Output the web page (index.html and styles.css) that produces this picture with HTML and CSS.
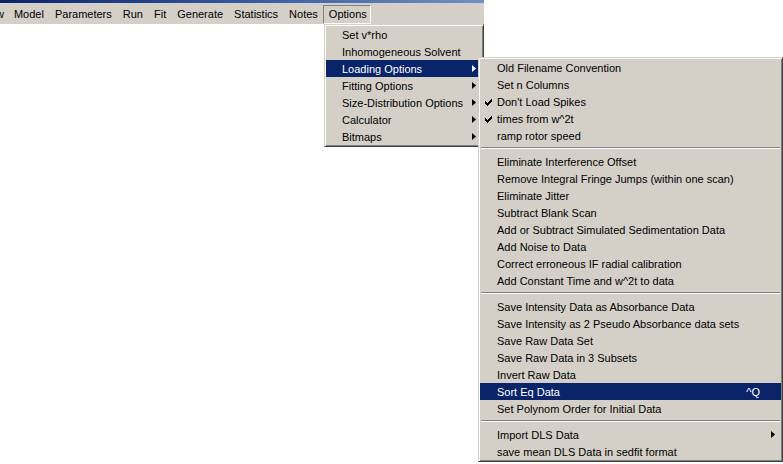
FILE: index.html
```html
<!DOCTYPE html>
<html>
<head>
<meta charset="utf-8">
<link rel="stylesheet" href="styles.css">
</head>
<body>
<div class="app">
  <div class="titlebar"></div>
  <div class="menubar">
    <span class="mb-item partial">w</span>
    <span class="mb-item">Model</span>
    <span class="mb-item">Parameters</span>
    <span class="mb-item">Run</span>
    <span class="mb-item">Fit</span>
    <span class="mb-item">Generate</span>
    <span class="mb-item">Statistics</span>
    <span class="mb-item">Notes</span>
    <span class="mb-item open">Options</span>
  </div>

  <div class="menu menu-options">
    <div class="row"><span class="ck"></span><span class="label">Set v*rho</span></div>
    <div class="row"><span class="ck"></span><span class="label">Inhomogeneous Solvent</span></div>
    <div class="row active"><span class="ck"></span><span class="label">Loading Options</span><svg class="arrow" width="4" height="7" viewBox="0 0 4 7"><polygon points="0,0 4,3.5 0,7"/></svg></div>
    <div class="row"><span class="ck"></span><span class="label">Fitting Options</span><svg class="arrow" width="4" height="7" viewBox="0 0 4 7"><polygon points="0,0 4,3.5 0,7"/></svg></div>
    <div class="row"><span class="ck"></span><span class="label">Size-Distribution Options</span><svg class="arrow" width="4" height="7" viewBox="0 0 4 7"><polygon points="0,0 4,3.5 0,7"/></svg></div>
    <div class="row"><span class="ck"></span><span class="label">Calculator</span><svg class="arrow" width="4" height="7" viewBox="0 0 4 7"><polygon points="0,0 4,3.5 0,7"/></svg></div>
    <div class="row"><span class="ck"></span><span class="label">Bitmaps</span><svg class="arrow" width="4" height="7" viewBox="0 0 4 7"><polygon points="0,0 4,3.5 0,7"/></svg></div>
  </div>

  <div class="menu menu-loading">
    <div class="row"><span class="ck"></span><span class="label">Old Filename Convention</span></div>
    <div class="row"><span class="ck"></span><span class="label">Set n Columns</span></div>
    <div class="row"><span class="ck"><svg width="7" height="7" viewBox="0 0 7 7"><path d="M0 2h1v1h1v1h1v-1h1v-1h1v-1h1v-1h1v3h-1v1h-1v1h-1v1h-1v1h-1v-1h-1v-1h-1z"/></svg></span><span class="label">Don't Load Spikes</span></div>
    <div class="row"><span class="ck"><svg width="7" height="7" viewBox="0 0 7 7"><path d="M0 2h1v1h1v1h1v-1h1v-1h1v-1h1v-1h1v3h-1v1h-1v1h-1v1h-1v1h-1v-1h-1v-1h-1z"/></svg></span><span class="label">times from w^2t</span></div>
    <div class="row"><span class="ck"></span><span class="label">ramp rotor speed</span></div>
    <div class="sep"></div>
    <div class="row"><span class="ck"></span><span class="label">Eliminate Interference Offset</span></div>
    <div class="row"><span class="ck"></span><span class="label">Remove Integral Fringe Jumps (within one scan)</span></div>
    <div class="row"><span class="ck"></span><span class="label">Eliminate Jitter</span></div>
    <div class="row"><span class="ck"></span><span class="label">Subtract Blank Scan</span></div>
    <div class="row"><span class="ck"></span><span class="label">Add or Subtract Simulated Sedimentation Data</span></div>
    <div class="row"><span class="ck"></span><span class="label">Add Noise to Data</span></div>
    <div class="row"><span class="ck"></span><span class="label">Correct erroneous IF radial calibration</span></div>
    <div class="row"><span class="ck"></span><span class="label">Add Constant Time and w^2t to data</span></div>
    <div class="sep"></div>
    <div class="row"><span class="ck"></span><span class="label">Save Intensity Data as Absorbance Data</span></div>
    <div class="row"><span class="ck"></span><span class="label">Save Intensity as 2 Pseudo Absorbance data sets</span></div>
    <div class="row"><span class="ck"></span><span class="label">Save Raw Data Set</span></div>
    <div class="row"><span class="ck"></span><span class="label">Save Raw Data in 3 Subsets</span></div>
    <div class="row"><span class="ck"></span><span class="label">Invert Raw Data</span></div>
    <div class="row active"><span class="ck"></span><span class="label">Sort Eq Data</span><span class="shortcut">^Q</span></div>
    <div class="row"><span class="ck"></span><span class="label">Set Polynom Order for Initial Data</span></div>
    <div class="sep"></div>
    <div class="row"><span class="ck"></span><span class="label">Import DLS Data</span><svg class="arrow" width="4" height="7" viewBox="0 0 4 7"><polygon points="0,0 4,3.5 0,7"/></svg></div>
    <div class="row"><span class="ck"></span><span class="label">save mean DLS Data in sedfit format</span></div>
  </div>
</div>
</body>
</html>
```
FILE: styles.css
```css
html, body {
  margin: 0;
  padding: 0;
  background: #ffffff;
}

body {
  font-family: "Liberation Sans", Arial, sans-serif;
  font-size: 11px;
  color: #000000;
}

.app {
  position: relative;
  width: 783px;
  height: 464px;
  overflow: hidden;
}

.titlebar {
  width: 484px;
  height: 3px;
  background: linear-gradient(to right, #0a246a 0%, #3a5ea0 55%, #7090c8 100%);
}

.menubar {
  width: 484px;
  height: 21px;
  background: #d4d0c8;
  display: flex;
  padding-left: 8px;
  box-sizing: border-box;
  white-space: nowrap;
}

.mb-item {
  height: 19px;
  margin-top: 2px;
  padding: 0 4px 0 5px;
  line-height: 17px;
  box-sizing: border-box;
  border: 1px solid transparent;
}

.mb-item.partial {
  margin-left: -18px;
  margin-right: -1px;
}

.mb-item.open {
  padding-right: 3px;
  border-color: #808080 #ffffff #ffffff #808080;
}

.menu {
  position: absolute;
  background: #d4d0c8;
  border: 1px solid;
  border-color: #d4d0c8 #404040 #404040 #d4d0c8;
  box-shadow: inset 1px 1px 0 #ffffff, inset -1px -1px 0 #808080;
  padding: 1px;
  box-sizing: border-box;
  white-space: nowrap;
}

.menu-options {
  left: 324px;
  top: 24px;
  width: 160px;
}

.menu-loading {
  left: 478px;
  top: 57px;
  width: 305px;
}

.row {
  height: 17px;
  display: flex;
  align-items: center;
}

.row.active {
  background: #0a246a;
  color: #ffffff;
}

.ck {
  width: 16px;
  height: 17px;
  display: flex;
  align-items: center;
  padding-left: 5px;
  box-sizing: border-box;
  flex: none;
}

.menu-loading .ck {
  width: 17px;
}

.ck svg {
  fill: #000000;
  margin-top: 1px;
}

.label {
  flex: 1;
}

.shortcut {
  margin-right: 21px;
}

.arrow {
  fill: #000000;
  margin-right: 6px;
  flex: none;
}

.row.active .arrow {
  fill: #ffffff;
}

.sep {
  height: 9px;
  padding-top: 3px;
  box-sizing: border-box;
}

.sep::before {
  content: "";
  display: block;
  margin: 0 1px;
  border-top: 1px solid #808080;
  border-bottom: 1px solid #ffffff;
}
```
